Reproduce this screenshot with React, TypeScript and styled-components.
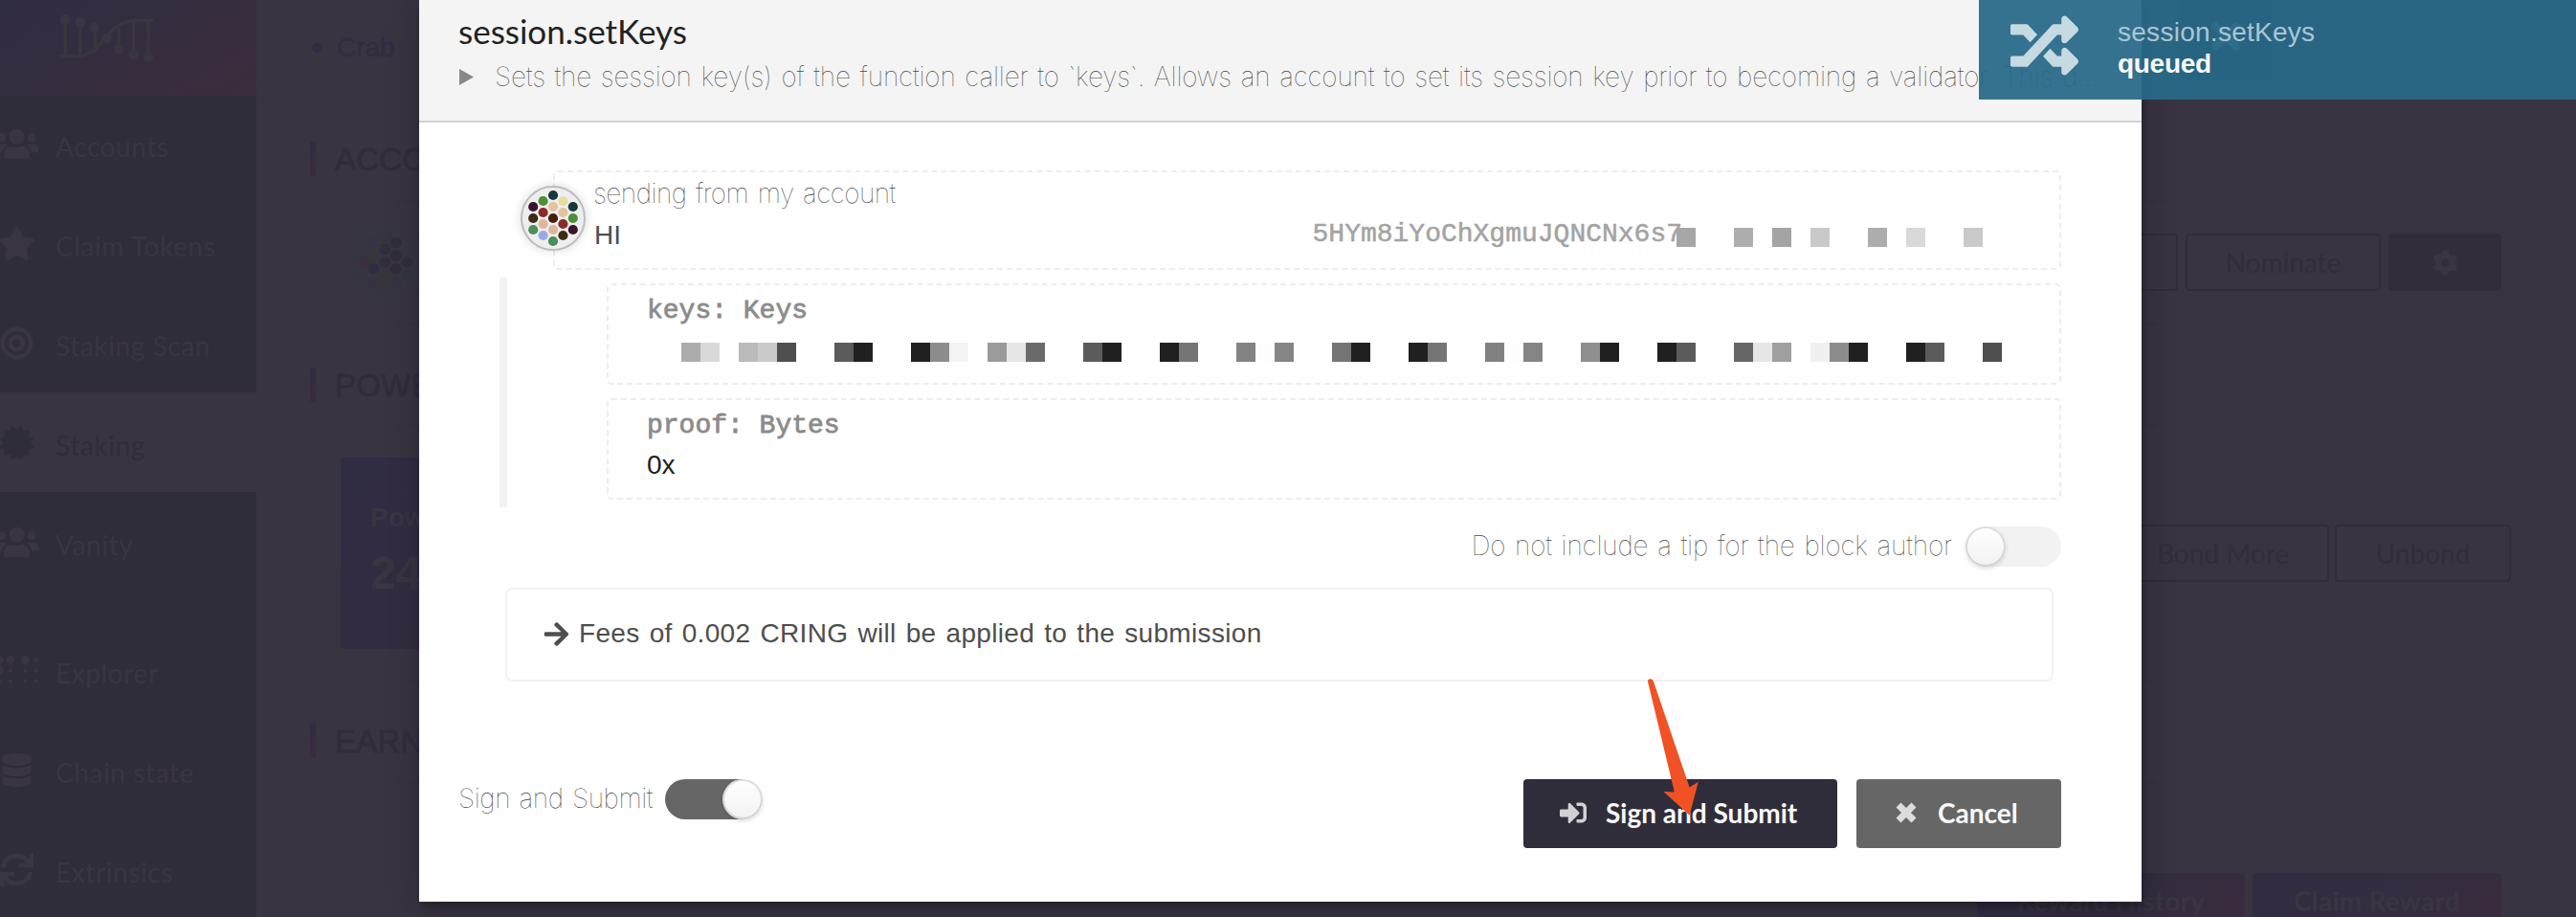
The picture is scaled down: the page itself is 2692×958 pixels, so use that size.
import React from 'react';
import styled, { createGlobalStyle, css } from 'styled-components';
import type { IconType } from 'react-icons';
import {
  FaArrowRight,
  FaBraille,
  FaBullseye,
  FaCertificate,
  FaCog,
  FaDatabase,
  FaRandom,
  FaSignInAlt,
  FaStar,
  FaSync,
  FaTimes,
  FaUsers,
} from 'react-icons/fa';

const sans = `'Liberation Sans', Arial, sans-serif`;
const lato = `Lato, 'Liberation Sans', sans-serif`;
const thin = `Inter, 'Liberation Sans', sans-serif`;
const mono = `'Liberation Mono', 'Courier New', monospace`;

const GlobalStyle = createGlobalStyle`
  *, *::before, *::after { box-sizing: border-box; }
  html, body { margin: 0; padding: 0; overflow: hidden; }
  body { font-family: ${sans}; font-size: 28px; background: #393441; }
  button { font: inherit; border: 0; margin: 0; padding: 0; }
`;

const Page = styled.div`
  position: relative;
  display: flex;
  width: 2692px;
  height: 958px;
  overflow: hidden;
  background: #393441;
`;

/* ---------- sidebar ---------- */

const Sidebar = styled.aside`
  flex: none;
  width: 268px;
  height: 958px;
  background: #2f2d39;
`;

const LogoBox = styled.div`
  height: 100px;
  margin-bottom: -2px;
  background: linear-gradient(150deg, #302c42 0%, #352d3f 45%, #382d3f 75%, #3d2c3c 100%);

  svg {
    display: block;
  }
`;

const NavItem = styled.div<{ $active?: boolean; $gap?: boolean }>`
  display: flex;
  align-items: center;
  gap: 24px;
  height: 104px;
  margin-top: ${(p) => (p.$gap ? '30px' : '0')};
  color: ${(p) => (p.$active ? '#2f2d39' : '#393541')};
  ${(p) =>
    p.$active &&
    css`
      background: #393441;
    `}
`;

const NavIcon = styled.span`
  display: flex;
  flex: none;
  justify-content: center;
  width: 34px;

  svg {
    flex: none;
  }
`;

const NavLabel = styled.span`
  padding-top: 6px;
  font-family: ${lato};
  line-height: 36px;
  letter-spacing: 0.6px;
  white-space: nowrap;
`;

/* ---------- staking page ---------- */

const Main = styled.main`
  flex: 1;
  min-width: 0;
`;

const TopBar = styled.header`
  display: flex;
  align-items: center;
  height: 102px;
  padding-left: 58px;
  border-bottom: 1px solid #37323f;
  color: #302c42;
`;

const Bullet = styled.span`
  width: 10px;
  height: 10px;
  margin: -2px 16px 0 0;
  border-radius: 50%;
  background: currentColor;
`;

const Network = styled.span`
  padding-bottom: 2px;
  line-height: 32px;
  -webkit-text-stroke: 0.6px currentColor;
`;

const AccountClose = styled.span`
  display: flex;
  align-items: center;
  justify-content: center;
  align-self: flex-start;
  width: 96px;
  height: 84px;
  margin: 0 318px 0 auto;
  padding-bottom: 8px;
  border-radius: 0 0 6px 6px;
  background: #1a1020;
  color: #8293a0;
`;

const Sections = styled.div`
  padding: 0 31px 0 56px;
`;

const SectionTitle = styled.h2<{ $top: number; $bottom: number }>`
  display: flex;
  align-items: center;
  height: 36px;
  margin: ${(p) => p.$top}px 0 ${(p) => p.$bottom}px;
  color: #312c3b;
  font-size: 33px;
  font-weight: 400;
  letter-spacing: 0.2px;
  line-height: 38px;
  -webkit-text-stroke: 0.8px currentColor;

  &::before {
    content: '';
    width: 6px;
    height: 36px;
    margin-right: 20px;
    background: linear-gradient(#302c42, #3a2c3d);
  }
`;

const SectionName = styled.span`
  padding-top: 2px;
`;

const Card = styled.section<{ $height: number; $left?: number; $right: number }>`
  display: flex;
  align-items: center;
  justify-content: space-between;
  height: ${(p) => p.$height}px;
  padding: 0 ${(p) => p.$right - 1}px 0 ${(p) => (p.$left ?? 32) - 1}px;
  border: 1px solid #36323e;
`;

const RewardCard = styled(Card)`
  align-items: flex-start;
  justify-content: flex-end;
  padding-top: 94px;
`;

const DimAvatar = styled.div`
  width: 86px;
  height: 86px;
  border-radius: 50%;
  background: #37353f;

  svg {
    display: block;
  }
`;

const PowerTile = styled.div`
  width: 720px;
  height: 200px;
  padding: 52px 31px 0;
  border-radius: 4px;
  background: linear-gradient(150deg, #302c42, #342c40 50%, #3a2c3d);
  color: #393541;
  font-weight: 700;
`;

const PowerLabel = styled.div`
  line-height: 22px;
`;

const PowerValue = styled.div`
  padding-top: 24px;
  font-size: 48px;
  line-height: 46px;
`;

const Actions = styled.div<{ $gap?: number }>`
  display: flex;
  gap: ${(p) => p.$gap ?? 8}px;
`;

const OutlineButton = styled.button<{ $width: number }>`
  width: ${(p) => p.$width}px;
  height: 60px;
  padding-bottom: 1px;
  border: 2px solid #312d3b;
  border-radius: 4px;
  background: transparent;
  color: #312d3b;
  font-family: ${lato};
`;

const GearButton = styled.button`
  display: flex;
  align-items: center;
  justify-content: center;
  width: 118px;
  height: 60px;
  border-radius: 4px;
  background: #312d3a;
  color: #393541;
`;

const GradientButton = styled.button<{ $width: number }>`
  width: ${(p) => p.$width}px;
  height: 60px;
  padding-bottom: 3px;
  border-radius: 4px;
  background: linear-gradient(150deg, #302c42, #342c40 50%, #3a2c3d);
  color: #393541;
  font-family: ${lato};
  font-weight: 700;
  letter-spacing: 0.2px;
  white-space: nowrap;
`;

/* ---------- modal ---------- */

const Modal = styled.div`
  position: absolute;
  top: 0;
  left: 438px;
  width: 1800px;
  height: 942px;
  background: #fff;
  box-shadow: 2px 6px 6px 0 rgba(0, 0, 0, 0.2), 2px 6px 30px 4px rgba(0, 0, 0, 0.2);
`;

const ModalHeader = styled.header`
  height: 128px;
  padding: 11px 0 0 41px;
  border-bottom: 2px solid #d4d4d5;
  background: #f4f4f4;
`;

const ModalTitle = styled.h1`
  margin: 0;
  color: #222;
  font-family: ${lato};
  font-size: 35px;
  font-weight: 400;
  line-height: 43px;
`;

const Thin = styled.span<{ $track: number }>`
  color: #4a4a4a;
  font-family: ${thin};
  font-size: 28px;
  font-weight: 100;
  letter-spacing: ${(p) => p.$track}px;
  word-spacing: 2px;
  white-space: nowrap;
`;

const Summary = styled.div`
  display: flex;
  align-items: center;
  height: 40px;
  margin-top: 6px;

  svg {
    flex: none;
    margin: 1px 22px 0 1px;
  }
`;

const ModalBody = styled.div`
  padding-top: 50px;
`;

const DashedBox = styled.div`
  border: 2px dashed #ededed;
  border-radius: 5px;
`;

const AccountBox = styled(DashedBox)`
  position: relative;
  height: 104px;
  margin: 0 84px 0 140px;
  padding: 0 80px 0 40px;

  ${Thin} {
    display: block;
    height: 43px;
    line-height: 45px;
  }
`;

const Avatar = styled.div`
  position: absolute;
  top: 14px;
  left: -36px;
  width: 68px;
  height: 68px;
  border: 2px solid #bdbdbd;
  border-radius: 50%;
  background: #eee;
  box-shadow: 0 0 8px 2px rgba(0, 0, 0, 0.1);

  svg {
    display: block;
  }
`;

const AccountRow = styled.div`
  display: flex;
  align-items: center;
  height: 44px;
  color: #4e4e4e;
`;

const AccountName = styled.span`
  padding: 1px 0 0 1px;
`;

const Address = styled.span`
  margin: 0 -1px 0 auto;
  padding-bottom: 1px;
  color: #a3a3a3;
  font-family: ${mono};
  -webkit-text-stroke: 0.5px currentColor;
`;

const Mosaic = styled.div<{ $cells: number }>`
  display: grid;
  grid-template-columns: repeat(${(p) => p.$cells}, 20px);
  height: 20px;
`;

const AddressMosaic = styled(Mosaic)`
  z-index: 1;
  margin: 6px 0 0 -5px;
`;

const KeysMosaic = styled(Mosaic)`
  margin: 12px 0 0 36px;
`;

const Cell = styled.i<{ $at: number; $shade: string }>`
  grid-row: 1;
  grid-column: ${(p) => p.$at + 1};
  background: ${(p) => p.$shade};
`;

const Params = styled.div`
  display: flex;
  flex-direction: column;
  gap: 14px;
  height: 240px;
  margin: 8px 84px 0 84px;
  padding: 6px 0 8px 104px;
  border-left: 8px solid #f2f2f2;
`;

const ParamBox = styled(DashedBox)`
  height: 106px;
  padding: 5px 0 0 40px;
`;

const ParamLabel = styled.div`
  color: #8b8b8b;
  font-family: ${mono};
  line-height: 43px;
  -webkit-text-stroke: 0.8px currentColor;
`;

const ParamValue = styled.div`
  color: #222;
  line-height: 40px;
`;

const TipRow = styled.div`
  display: flex;
  align-items: center;
  justify-content: flex-end;
  gap: 16px;
  height: 42px;
  margin: 20px 84px 0 0;

  ${Thin} {
    padding-bottom: 2px;
  }
`;

const Toggle = styled.span<{ $on?: boolean }>`
  display: flex;
  flex: none;
  width: 98px;
  height: 42px;
  padding-left: ${(p) => (p.$on ? '60px' : '0')};
  border-radius: 21px;
  background: ${(p) => (p.$on ? '#666' : '#f2f2f2')};

  &::after {
    content: '';
    flex: none;
    width: 42px;
    height: 42px;
    margin-left: ${(p) => (p.$on ? '0' : '-2px')};
    border-radius: 50%;
    background: #fff linear-gradient(transparent, rgba(0, 0, 0, 0.05));
    box-shadow: 0 2px 4px 0 rgba(34, 36, 38, 0.15), 0 0 0 2px rgba(34, 36, 38, 0.15) inset;
  }
`;

const FeeBox = styled.div`
  display: flex;
  align-items: center;
  height: 98px;
  margin: 22px 92px 0 90px;
  padding: 0 0 2px 37px;
  border: 2px solid #f1f1f1;
  border-radius: 7px;
  color: #4e4e4e;
  letter-spacing: 0.32px;
  word-spacing: 2px;

  svg {
    margin-right: 9px;
  }
`;

const ModalFooter = styled.footer`
  display: flex;
  justify-content: space-between;
  margin-top: 102px;
  padding: 0 84px 0 41px;
`;

const SignOption = styled.label`
  display: flex;
  align-items: center;
  gap: 13px;
  height: 42px;

  ${Thin} {
    padding-bottom: 2px;
  }
`;

const FooterButtons = styled.div`
  display: flex;
  gap: 20px;
`;

const FooterButton = styled.button<{ $width: number; $pad: number; $gap: number; $bg: string }>`
  display: flex;
  align-items: center;
  gap: ${(p) => p.$gap}px;
  width: ${(p) => p.$width}px;
  height: 72px;
  padding: 0 0 2px ${(p) => p.$pad}px;
  border-radius: 4px;
  background: ${(p) => p.$bg};
  color: #fafafa;
  font-family: ${lato};
  font-weight: 700;
  white-space: nowrap;

  svg {
    opacity: 0.8;
  }
`;

/* ---------- overlays ---------- */

const Toast = styled.div`
  position: absolute;
  top: 0;
  right: 0;
  display: flex;
  width: 624px;
  height: 104px;
  padding-left: 33px;
  background: rgba(40, 105, 136, 0.94);

  svg {
    flex: none;
    margin: 12px 41px 0 0;
    color: #c5dae1;
  }
`;

const ToastText = styled.div`
  padding-top: 18px;
  line-height: 32px;
`;

const ToastMethod = styled.div`
  color: #aac6d4;
  letter-spacing: 0.27px;
`;

const ToastStatus = styled.div`
  padding-top: 1px;
  color: #f8f8f9;
  font-weight: 700;
  letter-spacing: -0.3px;
`;

const Pointer = styled.svg`
  position: absolute;
  top: 705px;
  left: 1715px;
`;

/* ---------- data ---------- */

const navItems: { label: string; Icon: IconType; size: number; active?: boolean; gap?: boolean }[] = [
  { label: 'Accounts', Icon: FaUsers, size: 45 },
  { label: 'Claim Tokens', Icon: FaStar, size: 39 },
  { label: 'Staking Scan', Icon: FaBullseye, size: 35 },
  { label: 'Staking', Icon: FaCertificate, size: 35, active: true },
  { label: 'Vanity', Icon: FaUsers, size: 45 },
  { label: 'Explorer', Icon: FaBraille, size: 45, gap: true },
  { label: 'Chain state', Icon: FaDatabase, size: 35 },
  { label: 'Extrinsics', Icon: FaSync, size: 35 },
];

type Shade = [number, string];

const addressCells: Shade[] = [
  [0, '#a6a6a6'], [3, '#aeaeae'], [5, '#a4a4a4'], [7, '#c9c9c9'],
  [10, '#adadad'], [12, '#d9d9d9'], [15, '#cacaca'],
];

const keyCells: Shade[] = [
  [0, '#acacac'], [1, '#d9d9d9'], [3, '#bbbbbb'], [4, '#cacaca'], [5, '#4f4f4f'],
  [8, '#5b5b5b'], [9, '#202020'], [12, '#202020'], [13, '#8d8d8d'], [14, '#f3f3f3'],
  [16, '#9b9b9b'], [17, '#e6e6e6'], [18, '#6a6a6a'], [21, '#5b5b5b'], [22, '#202020'],
  [25, '#202020'], [26, '#757575'], [29, '#838383'], [30, '#fdfdfd'], [31, '#858585'],
  [34, '#757575'], [35, '#202020'], [38, '#202020'], [39, '#757575'], [42, '#818181'],
  [43, '#fdfdfd'], [44, '#858585'], [47, '#8f8f8f'], [48, '#202020'], [51, '#202020'],
  [52, '#5b5b5b'], [55, '#666666'], [56, '#e6e6e6'], [57, '#9f9f9f'], [59, '#f0f0f0'],
  [60, '#8d8d8d'], [61, '#202020'], [64, '#202020'], [65, '#5b5b5b'], [68, '#4f4f4f'],
];

/* Identicon dots: column, row in half steps, colour. */
type Dot = [number, number, string];

const accountDots: Dot[] = [
  [0, -2, '#3b1330'], [0, 0, '#3b2c13'], [0, 2, '#4a8f5a'],
  [1, -3, '#4a8f3a'], [1, -1, '#8a2b28'], [1, 1, '#e0b59a'], [1, 3, '#9aaae4'],
  [2, -4, '#17373d'], [2, -2, '#e4c49b'], [2, 0, '#431f0f'], [2, 2, '#e0b59a'], [2, 4, '#4a8f5a'],
  [3, -3, '#e6e0a0'], [3, -1, '#e4c49b'], [3, 1, '#8a2b28'], [3, 3, '#3b2c13'],
  [4, -2, '#17373d'], [4, 0, '#4a8f3a'], [4, 2, '#3b1330'],
];

const dimDots: Dot[] = [
  [0, 0, '#3a303e'], [0, 2, '#34353f'],
  [1, -3, '#353345'], [1, -1, '#38353c'], [1, 1, '#302d40'], [1, 3, '#39313f'],
  [2, -4, '#34353e'], [2, -2, '#312c39'], [2, 0, '#312d3a'], [2, 2, '#37353c'], [2, 4, '#38343d'],
  [3, -3, '#302e39'], [3, -1, '#312c39'], [3, 1, '#312c39'], [3, 3, '#353343'],
  [4, 0, '#302f39'], [4, 2, '#32353e'],
];

function Dots({ dots, size, dx, dy, r }: { dots: Dot[]; size: number; dx: number; dy: number; r: number }) {
  return (
    <svg width={size} height={size} viewBox={`${-size / 2} ${-size / 2} ${size} ${size}`}>
      {dots.map(([col, row, fill]) => (
        <circle key={`${col}:${row}`} cx={(col - 2) * dx} cy={row * dy} r={r} fill={fill} />
      ))}
    </svg>
  );
}

function Logo() {
  return (
    <svg width="268" height="98" viewBox="0 0 268 98" fill="none" stroke="#393541" strokeWidth="3.4">
      <path d="M62 58.7h17C112 58.7 106 21.2 145 21.2h16.3" />
      <path d="M68.3 20v38M83.7 23v34M99.3 28.7v22M124 51.5V29M139.5 57.3V22M155 60V21" />
      <g fill="#393541" stroke="none">
        <circle cx="68" cy="20.2" r="5.3" />
        <circle cx="83.7" cy="23" r="5.3" />
        <circle cx="99" cy="28.7" r="5.3" />
        <circle cx="111.5" cy="40" r="5.3" />
        <circle cx="124" cy="51.5" r="5.3" />
        <circle cx="139.5" cy="57.3" r="5.3" />
        <circle cx="155" cy="59.8" r="5.3" />
      </g>
    </svg>
  );
}

function BoldCross() {
  return (
    <svg width="22" height="22" viewBox="0 0 22 22" fill="none" stroke="currentColor" strokeWidth="7">
      <path d="M3 3L19 19M19 3L3 19" />
    </svg>
  );
}

const cells = (list: Shade[]) => list.map(([at, shade]) => <Cell key={at} $at={at} $shade={shade} />);

export default function App() {
  return (
    <Page>
      <GlobalStyle />
      <Sidebar>
        <LogoBox>
          <Logo />
        </LogoBox>
        {navItems.map(({ label, Icon, size, active, gap }) => (
          <NavItem key={label} $active={active} $gap={gap}>
            <NavIcon>
              <Icon size={size} />
            </NavIcon>
            <NavLabel>{label}</NavLabel>
          </NavItem>
        ))}
      </Sidebar>

      <Main>
        <TopBar>
          <Bullet />
          <Network>Crab</Network>
          <AccountClose>
            <FaTimes size={44} />
          </AccountClose>
        </TopBar>
        <Sections>
          <SectionTitle $top={46} $bottom={25}>
            <SectionName>ACCOUNT</SectionName>
          </SectionTitle>
          <Card $height={130} $left={35} $right={47}>
            <DimAvatar>
              <Dots dots={dimDots} size={86} dx={11.7} dy={6.85} r={5.8} />
            </DimAvatar>
            <Actions>
              <OutlineButton $width={204} />
              <OutlineButton $width={204}>Nominate</OutlineButton>
              <GearButton>
                <FaCog size={27} />
              </GearButton>
            </Actions>
          </Card>
          <SectionTitle $top={45} $bottom={24}>
            <SectionName>POWER</SectionName>
          </SectionTitle>
          <Card $height={268} $right={37}>
            <PowerTile>
              <PowerLabel>Power</PowerLabel>
              <PowerValue>24</PowerValue>
            </PowerTile>
            <Actions $gap={6}>
              <OutlineButton $width={222}>Bond More</OutlineButton>
              <OutlineButton $width={184}>Unbond</OutlineButton>
            </Actions>
          </Card>
          <SectionTitle $top={44} $bottom={25}>
            <SectionName>EARNINGS</SectionName>
          </SectionTitle>
          <RewardCard $height={260} $right={47}>
            <Actions>
              <GradientButton $width={280}>Reward History</GradientButton>
              <GradientButton $width={260}>Claim Reward</GradientButton>
            </Actions>
          </RewardCard>
        </Sections>
      </Main>

      <Modal>
        <ModalHeader>
          <ModalTitle>session.setKeys</ModalTitle>
          <Summary>
            <svg width="15" height="17" viewBox="0 0 15 17">
              <path d="M0 0L15 8.5L0 17Z" fill="#888" />
            </svg>
            <Thin $track={-0.16}>
              Sets the session key(s) of the function caller to `keys`. Allows an account to set its session key prior
              to becoming a validator. This d...
            </Thin>
          </Summary>
        </ModalHeader>
        <ModalBody>
          <AccountBox>
            <Avatar>
              <Dots dots={accountDots} size={64} dx={10.4} dy={6} r={5.1} />
            </Avatar>
            <Thin $track={-0.5}>sending from my account</Thin>
            <AccountRow>
              <AccountName>HI</AccountName>
              <Address>5HYm8iYoChXgmuJQNCNx6s7</Address>
              <AddressMosaic $cells={16}>{cells(addressCells)}</AddressMosaic>
            </AccountRow>
          </AccountBox>
          <Params>
            <ParamBox>
              <ParamLabel>keys: Keys</ParamLabel>
              <KeysMosaic $cells={69}>{cells(keyCells)}</KeysMosaic>
            </ParamBox>
            <ParamBox>
              <ParamLabel>proof: Bytes</ParamLabel>
              <ParamValue>0x</ParamValue>
            </ParamBox>
          </Params>
          <TipRow>
            <Thin $track={-0.16}>Do not include a tip for the block author</Thin>
            <Toggle />
          </TipRow>
          <FeeBox>
            <FaArrowRight size={29} />
            Fees of 0.002 CRING will be applied to the submission
          </FeeBox>
        </ModalBody>
        <ModalFooter>
          <SignOption>
            <Thin $track={-0.44}>Sign and Submit</Thin>
            <Toggle $on />
          </SignOption>
          <FooterButtons>
            <FooterButton $width={328} $pad={38} $gap={20} $bg="#302d3a">
              <FaSignInAlt size={28} />
              Sign and Submit
            </FooterButton>
            <FooterButton $width={214} $pad={41} $gap={22} $bg="#666">
              <BoldCross />
              Cancel
            </FooterButton>
          </FooterButtons>
        </ModalFooter>
      </Modal>

      <Toast>
        <FaRandom size={71} />
        <ToastText>
          <ToastMethod>session.setKeys</ToastMethod>
          <ToastStatus>queued</ToastStatus>
        </ToastText>
      </Toast>

      <Pointer width="64" height="150" viewBox="1715 705 64 150">
        <path
          d="M1722 712Q1722 709.3 1724.8 709.3Q1727.4 709.3 1728 712L1765.6 822.5L1774.8 816.7L1765.6 851.8L1738.5 827L1749.8 827.5Z"
          fill="#f05225"
        />
      </Pointer>
    </Page>
  );
}
